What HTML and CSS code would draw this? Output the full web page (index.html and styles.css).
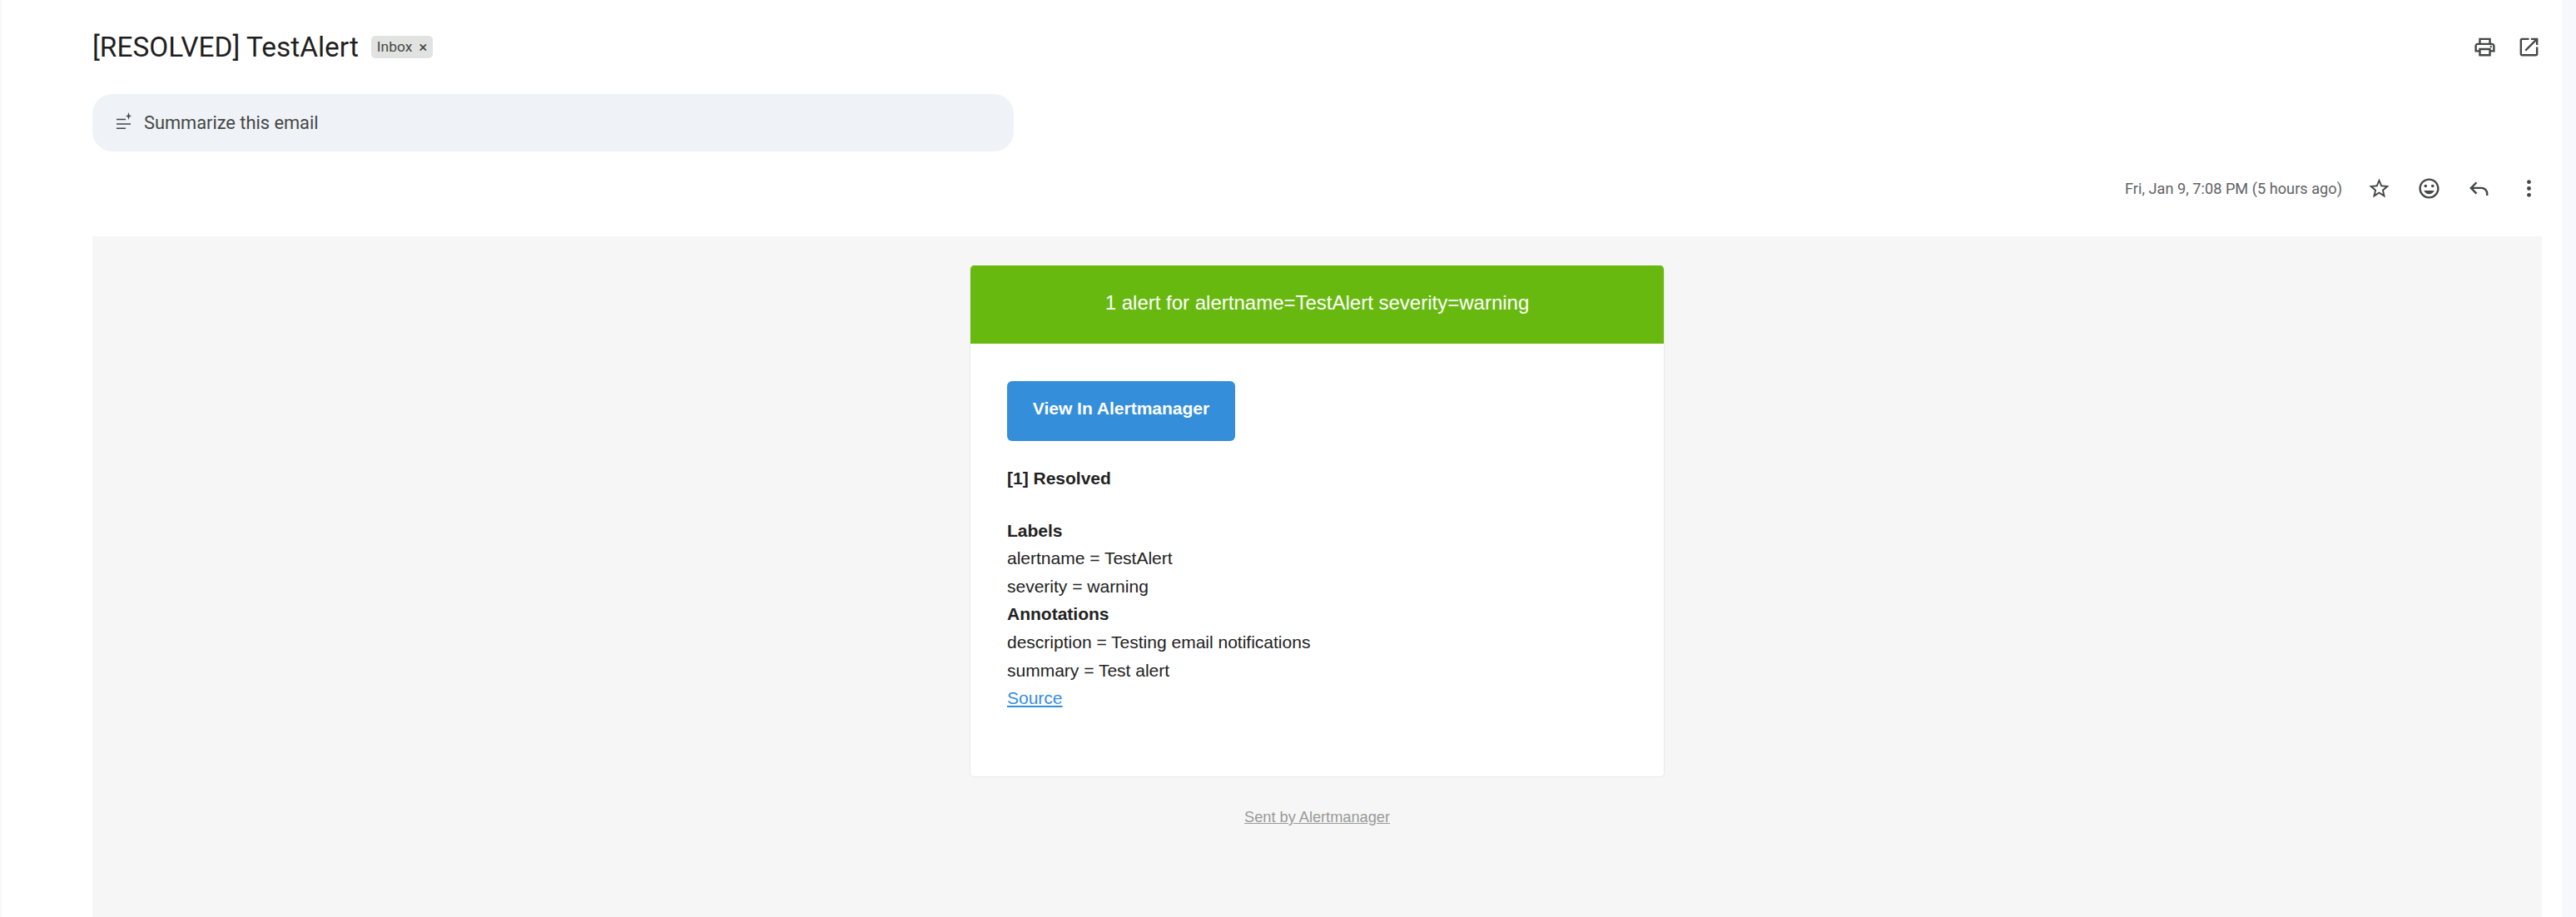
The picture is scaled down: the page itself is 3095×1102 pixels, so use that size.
FILE: index.html
```html
<!DOCTYPE html>
<html lang="en">
<head>
  <meta charset="UTF-8">
  <title>[RESOLVED] TestAlert</title>
  <link rel="stylesheet" href="styles.css">
</head>
<body>
  <main class="thread">
    <header class="subject-row">
      <div class="subject">
        <h1>[RESOLVED] TestAlert</h1>
        <span class="chip">Inbox <span class="chip-x">×</span></span>
      </div>
      <div class="subject-actions">
        <svg class="icon" viewBox="0 0 24 24"><path d="M19 8h-1V3H6v5H5c-1.66 0-3 1.34-3 3v6h4v4h12v-4h4v-6c0-1.66-1.34-3-3-3zM8 5h8v3H8V5zm8 12v2H8v-4h8v2zm2-2v-2H6v2H4v-4c0-.55.45-1 1-1h14c.55 0 1 .45 1 1v4h-2z"/><circle cx="18" cy="11.5" r="1"/></svg>
        <svg class="icon" viewBox="0 0 24 24"><path d="M19 19H5V5h7V3H5c-1.11 0-2 .9-2 2v14c0 1.1.89 2 2 2h14c1.1 0 2-.9 2-2v-7h-2v7zM14 3v2h3.59l-9.83 9.83 1.41 1.41L19 6.41V10h2V3h-7z"/></svg>
      </div>
    </header>

    <div class="summarize">
      <svg class="summarize-icon" viewBox="0 0 18 20"><path d="M0 7.8h11v1.4H0zM0 13.3h17v1.4H0zM0 18.6h11v1.4H0z"/><path d="M14.5 0l1 3.5 2.5 1-2.5 1-1 3.5-1-3.5-2.5-1 2.5-1z"/></svg>
      <span>Summarize this email</span>
    </div>

    <div class="meta-row">
      <span class="date">Fri, Jan 9, 7:08 PM (5 hours ago)</span>
      <svg class="icon" viewBox="0 0 24 24"><path d="M22 9.24l-7.19-.62L12 2 9.19 8.63 2 9.24l5.46 4.73L5.82 21 12 17.27 18.18 21l-1.63-7.03L22 9.24zM12 15.4l-3.76 2.27 1-4.28-3.32-2.88 4.38-.38L12 6.1l1.71 4.04 4.38.38-3.32 2.88 1 4.28L12 15.4z"/></svg>
      <svg class="icon" viewBox="0 0 24 24"><path d="M11.99 2C6.47 2 2 6.48 2 12s4.47 10 9.99 10C17.52 22 22 17.52 22 12S17.52 2 11.99 2zM12 20c-4.42 0-8-3.58-8-8s3.58-8 8-8 8 3.58 8 8-3.58 8-8 8z"/><circle cx="15.5" cy="9.5" r="1.5"/><circle cx="8.5" cy="9.5" r="1.5"/><path d="M12 17.5c2.33 0 4.31-1.46 5.11-3.5H6.89c.8 2.04 2.78 3.5 5.11 3.5z"/></svg>
      <svg class="icon icon-line" viewBox="0 0 24 24"><path d="M9.5 6L4 11.5 9.5 17M4 11.5h10.5a5.5 5.5 0 0 1 5.5 5.5v2"/></svg>
      <svg class="icon" viewBox="0 0 24 24"><circle cx="12" cy="5.5" r="2"/><circle cx="12" cy="12" r="2"/><circle cx="12" cy="18.5" r="2"/></svg>
    </div>

    <section class="email">
      <div class="card">
        <div class="alert-head">1 alert for alertname=TestAlert severity=warning</div>
        <div class="alert-body">
          <a class="btn" href="#">View In Alertmanager</a>
          <p class="state"><strong>[1] Resolved</strong></p>
          <div class="details">
            <strong>Labels</strong><br>
            alertname = TestAlert<br>
            severity = warning<br>
            <strong>Annotations</strong><br>
            description = Testing email notifications<br>
            summary = Test alert<br>
            <a href="#">Source</a>
          </div>
        </div>
      </div>
      <p class="footer"><a href="#">Sent by Alertmanager</a></p>
    </section>
  </main>
</body>
</html>
```

FILE: styles.css
```css
* {
  box-sizing: border-box;
}

html, body {
  height: 100%;
}

body {
  margin: 0;
  padding: 0 17px 0 2px;
  background-color: #f6f8fc;
  overflow: hidden;
  font-family: 'Roboto', 'Liberation Sans', sans-serif;
}

.thread {
  display: flex;
  flex-direction: column;
  height: 100%;
  padding: 0 24px 0 109px;
  background-color: #fff;
}

.icon {
  width: 29px;
  height: 29px;
  flex: none;
  fill: #444746;
}

.icon-line {
  fill: none;
  stroke: #444746;
  stroke-width: 2;
}

/* subject */
.subject-row {
  display: flex;
  align-items: center;
  justify-content: space-between;
  height: 113px;
  padding-bottom: 1px;
}

.subject {
  display: flex;
  align-items: center;
  gap: 15px;
}

h1 {
  margin: 0;
  font-size: 33.4px;
  font-weight: 400;
  color: #1f1f1f;
}

.chip {
  display: flex;
  align-items: center;
  gap: 8px;
  height: 27px;
  padding: 0 7px;
  border-radius: 5px;
  background-color: #e1e3e1;
  font-size: 17.4px;
  color: #444746;
}

.chip-x {
  font-size: 19px;
}

.subject-actions {
  display: flex;
  gap: 24px;
  margin-right: 1px;
}

/* summarize */
.summarize {
  display: flex;
  align-items: center;
  gap: 15px;
  width: 1107px;
  height: 69px;
  flex: none;
  padding-left: 29px;
  border-radius: 24px;
  background-color: #eff2f7;
  font-size: 21.8px;
  color: #444746;
}

.summarize-icon {
  width: 18px;
  height: 20px;
  margin-bottom: 5px;
  fill: #444746;
}

.meta-row {
  display: flex;
  align-items: center;
  justify-content: flex-end;
  flex: none;
  gap: 31px;
  height: 102px;
  padding-bottom: 13px;
  margin-right: 1px;
}

.date {
  margin-right: -1px;
  font-size: 18.2px;
  color: #5f6368;
}

/* email body */
.email {
  flex: 1;
  padding-top: 35px;
  background-color: #f6f6f6;
  font-family: 'Liberation Sans', Arial, sans-serif;
  font-size: 21px;
  line-height: 33.6px;
  color: #222;
}

.card {
  width: 835px;
  height: 615px;
  margin: 0 auto;
  border: 1px solid #e9e9e9;
  border-top: 0;
  border-radius: 5px;
  background-color: #fff;
  overflow: hidden;
}

.alert-head {
  height: 94px;
  margin: 0 -1px;
  background-color: #68b90f;
  font-size: 24px;
  line-height: 89px;
  text-align: center;
  color: #fff;
}

.alert-body {
  padding: 45px 44px 0;
}

.btn {
  display: block;
  width: 274px;
  height: 72px;
  border-radius: 6px;
  background-color: #348eda;
  font-weight: bold;
  line-height: 66px;
  text-align: center;
  text-decoration: none;
  color: #fff;
}

.state {
  margin: 28px 0 29px;
}

.details a {
  color: #348eda;
}

.footer {
  margin: 35px 0 0;
  font-size: 18.2px;
  line-height: 26px;
  text-align: center;
}

.footer a {
  color: #999;
}
```
